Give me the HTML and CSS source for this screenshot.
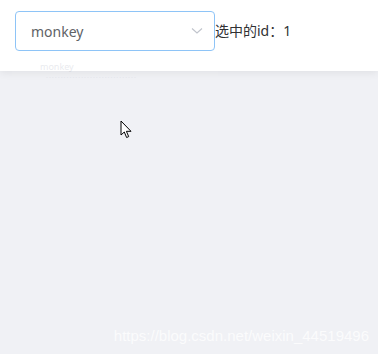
FILE: index.html
```html
<!DOCTYPE html>
<html lang="zh">
<head>
<meta charset="utf-8">
<link rel="stylesheet" href="styles.css">
</head>
<body>
<div class="header">
  <div class="select">
    <span class="value">monkey</span>
    <svg class="arrow" width="12" height="8" viewBox="0 0 12 8"><path d="M1 1.5 L6 6 L11 1.5" fill="none" stroke="#c0c4cc" stroke-width="1.1"/></svg>
  </div>
  <span class="result">选中的id：1</span>
</div>
<div class="ghost">
  <div class="ghost-item">monkey</div>
  <div class="ghost-item small">-------------------------------</div>
</div>
<svg class="cursor" width="13" height="20" viewBox="0 0 13 20"><path d="M1 1 L1 15 L4.3 12 L6.6 17.5 L8.7 16.6 L6.4 11.3 L11 11.3 Z" fill="#fff" stroke="#000" stroke-width="1" stroke-linejoin="round"/></svg>
<div class="watermark">https://blog.csdn.net/weixin_44519496</div>
</body>
</html>
```
FILE: styles.css
```css
html, body {
  margin: 0;
  height: 100%;
}
body {
  background: #f0f1f5;
  font-family: "Noto Sans", "Noto Sans CJK SC", sans-serif;
  position: relative;
  overflow: hidden;
}
.header {
  height: 71px;
  background: #fff;
  box-shadow: 0 2px 8px rgba(0, 0, 0, 0.07);
  display: flex;
  align-items: flex-start;
  padding: 11px 0 0 15px;
  box-sizing: border-box;
  position: relative;
  z-index: 1;
}
.select {
  width: 200px;
  height: 40px;
  box-sizing: border-box;
  border: 1px solid #8ec4f7;
  border-radius: 4px;
  display: flex;
  align-items: center;
  justify-content: space-between;
  padding: 0 11px 0 15px;
  background: #fff;
}
.value {
  font-size: 14px;
  color: #606266;
}
.arrow {
  display: block;
}
.result {
  font-size: 14px;
  color: #303133;
  line-height: 40px;
}
.ghost {
  position: absolute;
  left: 12px;
  top: 60px;
  width: 206px;
  background: rgba(255, 255, 255, 0.3);
  z-index: 2;
  opacity: 0.18;
  padding-left: 28px;
  box-sizing: border-box;
}
.ghost-item {
  font-size: 9px;
  line-height: 13px;
  color: #8a90a8;
}
.ghost-item.small {
  font-size: 6px;
  line-height: 9px;
  padding-left: 6px;
  letter-spacing: 1px;
}
.cursor {
  position: absolute;
  left: 120px;
  top: 120px;
}
.watermark {
  position: absolute;
  right: 9px;
  bottom: 10px;
  font-family: "Liberation Sans", Arial, sans-serif;
  font-size: 15px;
  color: rgba(255, 255, 255, 0.75);
}
```
